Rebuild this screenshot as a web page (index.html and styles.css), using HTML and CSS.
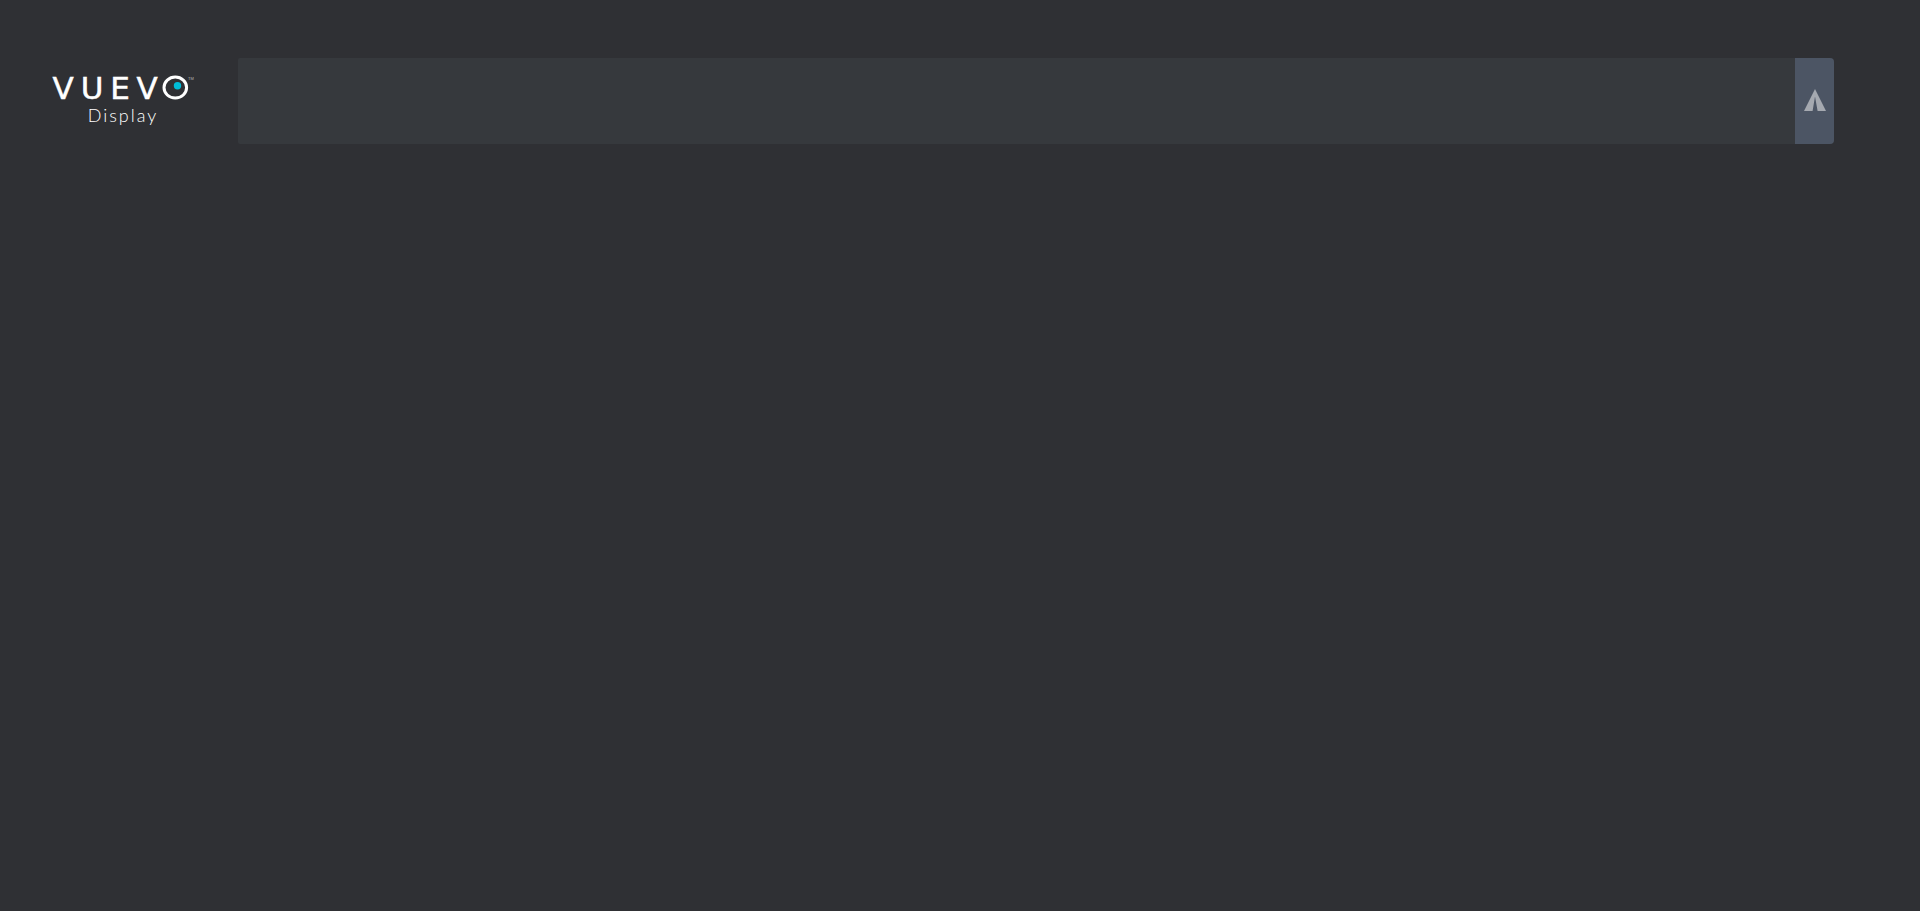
FILE: index.html
```html
<!DOCTYPE html>
<html lang="en">
<head>
<meta charset="utf-8">
<title>VUEVO Display</title>
<link rel="stylesheet" href="styles.css">
</head>
<body>
<header class="topbar">
  <div class="brand">
    <svg class="brand-logo" viewBox="0 0 146 26" role="img" aria-label="VUEVO">
      <text class="brand-letters" x="13 42 70 97" y="23">VUEV</text>
      <ellipse class="brand-ring" cx="125.3" cy="11.6" rx="11.3" ry="10.5"/>
      <circle class="brand-pupil" cx="127.5" cy="9.8" r="3.7"/>
      <text class="brand-mark" x="141" y="4">TM</text>
    </svg>
    <span class="brand-name">Display</span>
  </div>
  <div class="panel">
    <div class="panel-content"></div>
    <button class="panel-toggle" type="button" aria-label="Collapse panel">
      <svg class="toggle-icon" viewBox="0 0 22 22" aria-hidden="true">
        <path d="M11 0 22 22H13.6L11 7.5 8.6 22H0Z"/>
      </svg>
    </button>
  </div>
</header>
</body>
</html>
```

FILE: styles.css
```css
body {
  margin: 0;
  min-height: 100vh;
  background: #2f3034;
  color: #fff;
  font-family: Lato, "Liberation Sans", sans-serif;
}

.topbar {
  display: flex;
  align-items: stretch;
  gap: 42px;
  padding: 58px 86px 0 50px;
}

.brand {
  display: flex;
  flex: none;
  flex-direction: column;
  align-items: center;
  justify-content: center;
  gap: 2px;
  width: 146px;
}

.brand-logo {
  display: block;
  width: 146px;
  height: 26px;
  overflow: visible;
}

.brand-letters {
  fill: #fff;
  stroke: #fff;
  stroke-width: 0.5;
  font: 31px "DejaVu Sans", sans-serif;
  text-anchor: middle;
}

.brand-ring {
  fill: none;
  stroke: #fff;
  stroke-width: 3;
}

.brand-pupil {
  fill: #00bcd8;
}

.brand-mark {
  fill: #b4b4b6;
  font: 4px "Liberation Sans", sans-serif;
  text-anchor: middle;
}

.brand-name {
  font-size: 18px;
  font-weight: 300;
  line-height: 22px;
  letter-spacing: 2px;
}

.panel {
  display: flex;
  flex: 1;
  min-height: 86px;
  overflow: hidden;
  border-radius: 2px 4px 4px 2px;
  background: #36393d;
}

.panel-content {
  flex: 1;
}

.panel-toggle {
  display: flex;
  align-items: center;
  justify-content: center;
  width: 39px;
  padding: 0 0 2px;
  border: 0;
  background: #4c5564;
  cursor: pointer;
}

.toggle-icon {
  width: 22px;
  height: 22px;
  fill: #a5a9b0;
}
```
